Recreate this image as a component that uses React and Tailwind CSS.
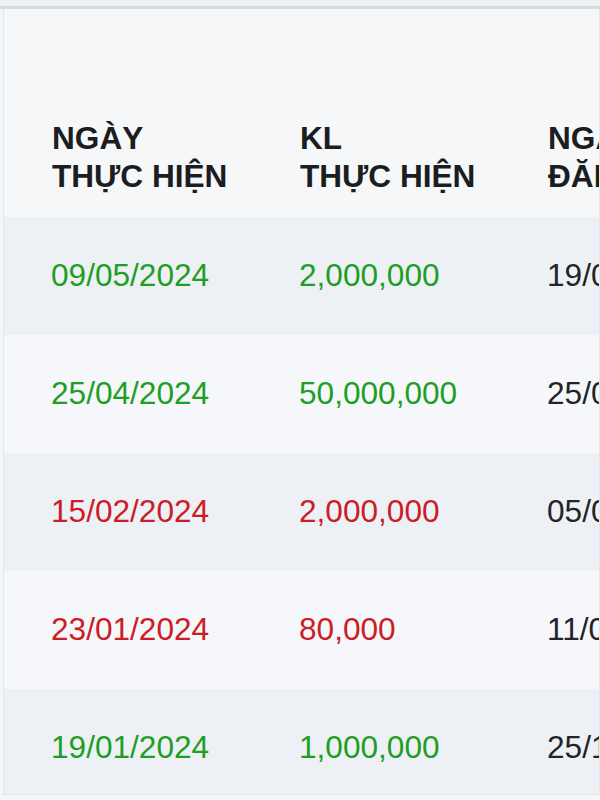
import React from 'react';

const rows = [
  { date: '09/05/2024', qty: '2,000,000', reg: '19/04/2024', up: true },
  { date: '25/04/2024', qty: '50,000,000', reg: '25/03/2024', up: true },
  { date: '15/02/2024', qty: '2,000,000', reg: '05/02/2024', up: false },
  { date: '23/01/2024', qty: '80,000', reg: '11/01/2024', up: false },
  { date: '19/01/2024', qty: '1,000,000', reg: '25/12/2023', up: true },
];

const App = () => {
  return (
    <div
      className="w-[600px] h-[800px] overflow-hidden bg-[#f4f6f9]"
      style={{ fontFamily: '"Liberation Sans", Arial, sans-serif' }}
    >
      <div className="h-[6px] bg-[#edf2f6]" />
      <div className="h-[3px] bg-[#d6dbe0]" />
      <div className="ml-[3px] border-l border-r border-b border-[#e2e7ec] h-[786px] overflow-hidden">
        {/* header */}
        <div className="h-[208px] bg-[#f5f7f9] flex items-end pb-[22px] pl-[48px] text-[31.6px] leading-[38px] font-bold text-[#1b1d20] whitespace-nowrap">
          <div className="w-[248px] shrink-0">
            NGÀY
            <br />
            THỰC HIỆN
          </div>
          <div className="w-[248px] shrink-0">
            KL
            <br />
            THỰC HIỆN
          </div>
          <div className="w-[248px] shrink-0">
            NGÀY
            <br />
            ĐĂNG KÝ
          </div>
        </div>

        {rows.map((r, i) => (
          <div
            key={r.date}
            className={
              'h-[118px] flex items-center pl-[47px] text-[31.6px] whitespace-nowrap ' +
              (i % 2 === 0 ? 'bg-[#edf1f5]' : 'bg-[#f5f7fa]')
            }
          >
            <div className={'w-[248px] shrink-0 ' + (r.up ? 'text-[#1f9e25]' : 'text-[#cc1d26]')}>
              {r.date}
            </div>
            <div className={'w-[248px] shrink-0 ' + (r.up ? 'text-[#1f9e25]' : 'text-[#cc1d26]')}>
              {r.qty}
            </div>
            <div className="w-[248px] shrink-0 text-[#222426]">{r.reg}</div>
          </div>
        ))}
      </div>
    </div>
  );
};

export default App;
